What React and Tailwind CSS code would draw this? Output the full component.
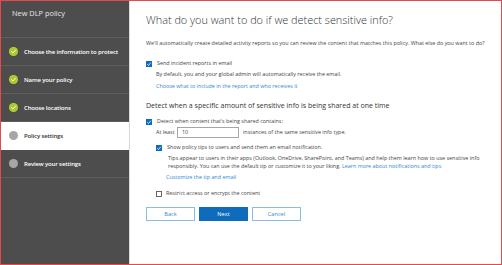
import React from "react";

const F = { fontFamily: '"Open Sans", "Noto Sans", Arial, sans-serif' };

function GreenCheck() {
  return (
    <svg width="9" height="9" viewBox="0 0 18 18" className="shrink-0">
      <circle cx="9" cy="9" r="9" fill="#b5d334" />
      <circle cx="9" cy="9" r="7" fill="#a9c92a" />
      <path d="M5 9.4 L7.8 12 L13 6.4" fill="none" stroke="#ffffff" strokeWidth="2" strokeLinecap="round" strokeLinejoin="round" />
    </svg>
  );
}

function GrayDot() {
  return <span className="shrink-0 w-[9px] h-[9px] rounded-full bg-[#a6a6a6]" />;
}

function Checked() {
  return (
    <span className="shrink-0 w-[6px] h-[6px] bg-[#0f6cbd] flex items-center justify-center">
      <svg width="6" height="6" viewBox="0 0 12 12">
        <path d="M2.5 6.5 L5 9 L9.5 3.5" fill="none" stroke="#ffffff" strokeWidth="1.6" />
      </svg>
    </span>
  );
}

function Unchecked() {
  return <span className="shrink-0 w-[6px] h-[6px] border border-[#666] bg-white" />;
}

function NavRow({ done, active, label }) {
  return (
    <div
      className={
        "h-[28px] flex items-center gap-[6px] pl-[8px] border-b " +
        (active ? "bg-white border-white text-[#333]" : "border-[#5e5e5e] text-white")
      }
    >
      {done ? <GreenCheck /> : <GrayDot />}
      <span className="text-[6px] font-semibold leading-none whitespace-nowrap tracking-[-0.15px]">{label}</span>
    </div>
  );
}

export default function App() {
  return (
    <div style={F} className="w-[502px] h-[265px] border border-[#e8474b] flex bg-white overflow-hidden">
      <aside className="w-[129px] shrink-0 bg-[#4d4d4d] border-r border-[#d9d9d9] flex flex-col">
        <div className="h-[37px] border-b border-[#5e5e5e] pl-[11px] pt-[7px] text-[7.4px] text-[#e6e6e6] leading-[10px]">
          New DLP policy
        </div>
        <NavRow done label="Choose the information to protect" />
        <NavRow done label="Name your policy" />
        <NavRow done label="Choose locations" />
        <NavRow active label="Policy settings" />
        <NavRow label="Review your settings" />
      </aside>
      <main className="flex-1 pl-[16px] pt-[11px] text-[#444]">
        <h1 className="h-[16px] leading-[16px] text-[10.9px] font-light text-[#333] whitespace-nowrap">
          What do you want to do if we detect sensitive info?
        </h1>
        <p className="mt-[11px] h-[9px] leading-[9px] text-[5.4px] whitespace-nowrap">
          We'll automatically create detailed activity reports so you can review the content that matches this policy. What else do you want to do?
        </p>
        <div className="mt-[11px] h-[9px] flex items-center gap-[5px] text-[5.4px]">
          <Checked />
          <span>Send incident reports in email</span>
        </div>
        <div className="mt-[2px] h-[9px] leading-[9px] pl-[10px] text-[5.4px]">
          By default, you and your global admin will automatically receive the email.
        </div>
        <div className="mt-[3px] h-[9px] leading-[9px] pl-[10px] text-[5.4px] text-[#2b88d8]">
          Choose what to include in the report and who receives it
        </div>
        <h2 className="mt-[9px] h-[11px] leading-[11px] text-[7px] text-[#333] whitespace-nowrap">
          Detect when a specific amount of sensitive info is being shared at one time
        </h2>
        <div className="mt-[6px] h-[9px] flex items-center gap-[5px] text-[5.4px]">
          <Checked />
          <span>Detect when content that's being shared contains:</span>
        </div>
        <div className="h-[12px] flex items-center pl-[10px] text-[5.4px]">
          <span className="w-[21px]">At least</span>
          <span className="w-[62px] h-[11px] border border-[#a6a6a6] flex items-center pl-[4px] text-[5.4px]">10</span>
          <span className="ml-[4px]">instances of the same sensitive info type.</span>
        </div>
        <div className="mt-[5px] h-[9px] pl-[10px] flex items-center gap-[5px] text-[5.4px]">
          <Checked />
          <span>Show policy tips to users and send them an email notification.</span>
        </div>
        <div className="mt-[2px] pl-[22px] pr-[10px] text-[5.4px] leading-[8px]">
          <div className="whitespace-nowrap">Tips appear to users in their apps (Outlook, OneDrive, SharePoint, and Teams) and help them learn how to use sensitive info</div>
          <div className="whitespace-nowrap">
            responsibly. You can use the default tip or customize it to your liking.{" "}
            <span className="text-[#2b88d8]">Learn more about notifications and tips</span>
          </div>
        </div>
        <div className="mt-[3px] h-[9px] leading-[9px] pl-[20px] text-[5.4px] text-[#2b88d8]">
          Customize the tip and email
        </div>
        <div className="mt-[7px] h-[9px] pl-[10px] flex items-center gap-[4px] text-[5.4px]">
          <Unchecked />
          <span>Restrict access or encrypt the content</span>
        </div>
        <div className="mt-[9px] flex gap-[4px] text-[5.6px]">
          <button className="w-[49px] h-[14px] border border-[#8cbbe6] text-[#2b88d8] bg-white">Back</button>
          <button className="w-[49px] h-[14px] bg-[#0f6cbd] text-white">Next</button>
          <button className="w-[49px] h-[14px] border border-[#8cbbe6] text-[#2b88d8] bg-white">Cancel</button>
        </div>
      </main>
    </div>
  );
}
